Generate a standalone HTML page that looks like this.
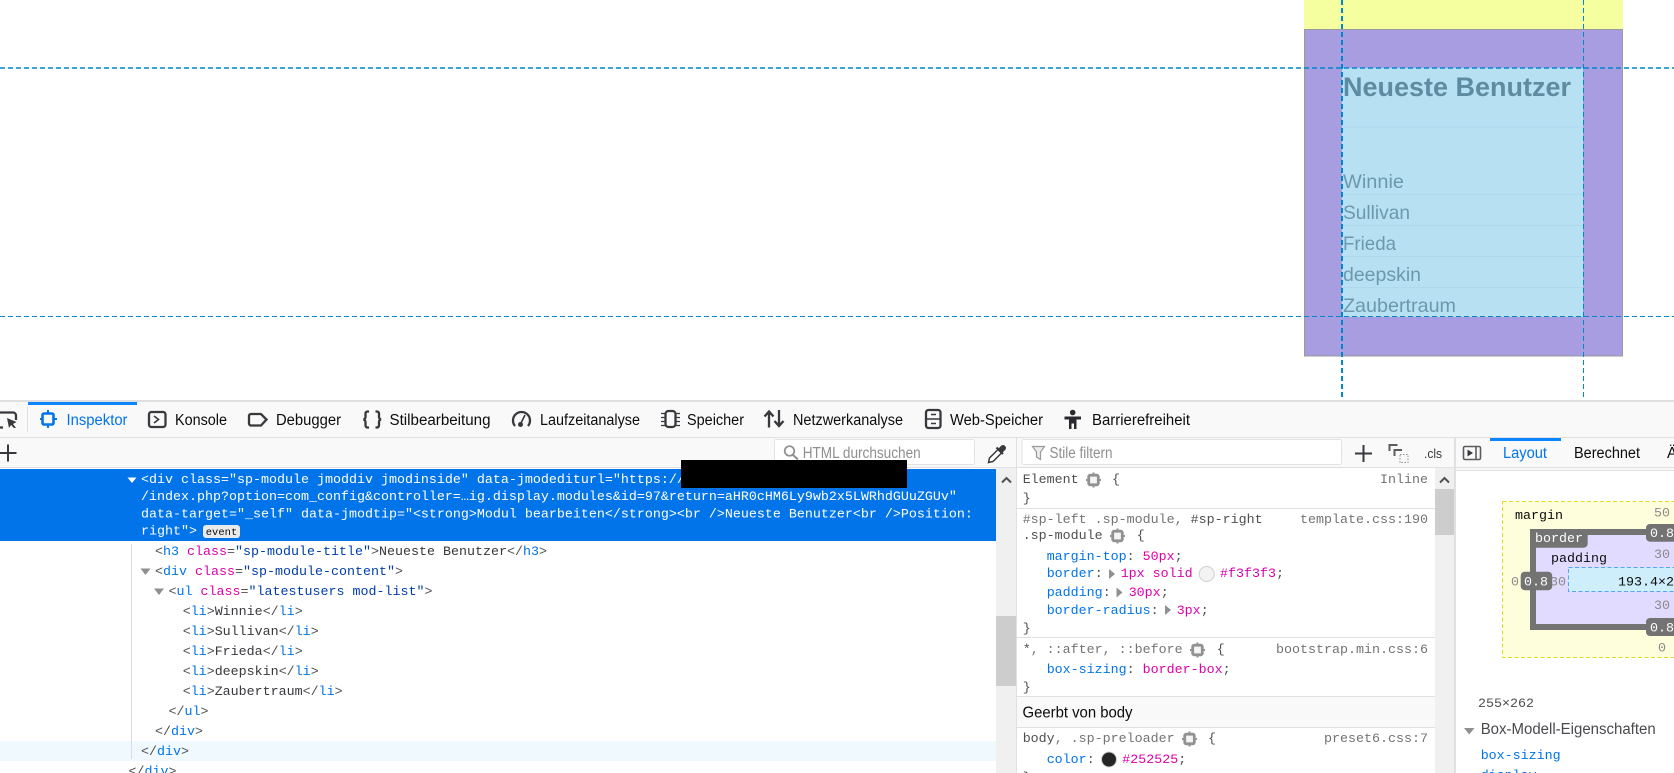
<!DOCTYPE html>
<html lang="de"><head><meta charset="utf-8"><title>Inspektor</title>
<style>
html,body{margin:0;padding:0;background:#fff;overflow:hidden}
svg{display:block}
text{white-space:pre}
.m{font:13.33px "Liberation Mono",monospace;transform:translateY(-1px)}
.s{font:15.3px "Liberation Sans",sans-serif;fill:#0c0c0d}
.b{fill:#0074e8}.p{fill:#dd00a9}.v{fill:#003eaa}.g{fill:#4f4f52}.t{fill:#38383d}.d{fill:#737373}.w{fill:#fff}.k{fill:#0c0c0d}.n{fill:#8a8a8a}
.i{fill:none;stroke:#38383d;stroke-width:2.3}
</style></head><body>
<svg xmlns="http://www.w3.org/2000/svg" width="1674" height="773" viewBox="0 0 1674 773">
<defs>
<g id="node"><rect x="-4.800" y="-4.800" width="9.600" height="9.600" rx="1.500" fill="#f4f4f4" stroke="#929292" stroke-width="2.800"/><path d="M-7.500 0H-5M5 0H7.500M0-7.500V-5M0 5V7.500" stroke="#929292" stroke-width="2"/></g>
</defs>
<rect width="1674" height="773" fill="#fff"/>
<!-- page overlay -->
<rect x="1304" y="0" width="319" height="29" fill="#f5ffa0"/>
<rect x="1304.500" y="29.500" width="318" height="326.500" fill="#a79de0" stroke="#9a9a9a"/>
<rect x="1342" y="68" width="241" height="249" fill="#b7e0f3"/>
<path d="M1342 127H1583M1342 194.500H1583M1342 225.500H1583M1342 256.500H1583M1342 287.500H1583" stroke="#aed9ec" stroke-width="1"/>
<text x="1343" y="96" font-family="Liberation Sans" font-weight="700" font-size="27" fill="#5f8ba0" textLength="228" lengthAdjust="spacingAndGlyphs">Neueste Benutzer</text>
<g font-family="Liberation Sans" font-size="19.500" fill="#6d98ac">
<text x="1343" y="188" textLength="61" lengthAdjust="spacingAndGlyphs">Winnie</text>
<text x="1343" y="219" textLength="67" lengthAdjust="spacingAndGlyphs">Sullivan</text>
<text x="1343" y="250" textLength="53" lengthAdjust="spacingAndGlyphs">Frieda</text>
<text x="1343" y="281" textLength="78" lengthAdjust="spacingAndGlyphs">deepskin</text>
<text x="1343" y="312" textLength="113" lengthAdjust="spacingAndGlyphs">Zaubertraum</text>
</g>
<g fill="none" stroke="#0088cc" stroke-dasharray="5 3">
<path d="M0 68H1674" stroke-width="1.400"/>
<path d="M0 316.500H1674" stroke-width="1"/>
<path d="M1342 0V400" stroke-width="2"/>
<path d="M1583.500 0V400" stroke-width="1"/>
</g>

<!-- devtools toolbar -->
<rect x="0" y="400" width="1674" height="373" fill="#fff"/>
<rect x="0" y="402" width="1674" height="66" fill="#f9f9fa"/>
<rect x="0" y="400" width="1674" height="2" fill="#e0e0e2"/>
<rect x="0" y="437" width="1674" height="1" fill="#e0e0e2"/>
<rect x="0" y="467" width="1674" height="1" fill="#e0e0e2"/>
<rect x="27" y="407" width="1" height="25" fill="#e0e0e2"/>
<rect x="28" y="402" width="109" height="3" fill="#0a84ff"/>
<!-- pick -->
<path class="i" d="M-2 412.500H13a3 3 0 0 1 3 3V420M3 427.500H-2"/>
<path d="M7 418L16.500 422L13 424L16 428H14L11 425L9 428Z" fill="#38383d"/>
<!-- inspector -->
<rect x="42.500" y="413.500" width="11" height="11" rx="1.500" fill="none" stroke="#0074e8" stroke-width="2.600"/>
<path d="M40 419H43M53 419H57M48 410V414M48 424V428" stroke="#0074e8" stroke-width="2"/>
<text class="s b" style="fill:#0074e8" x="66.500" y="425" textLength="61" lengthAdjust="spacingAndGlyphs">Inspektor</text>
<!-- console -->
<rect x="149" y="412" width="16.500" height="15" rx="2.500" class="i"/>
<path d="M154 416L158.500 419.500L154 423" fill="none" stroke="#38383d" stroke-width="1.600"/>
<text class="s" x="175" y="425" textLength="52" lengthAdjust="spacingAndGlyphs">Konsole</text>
<!-- debugger -->
<path class="i" d="M251 414H261L266.500 419.500L261 425.500H251a2 2 0 0 1-2-2V416a2 2 0 0 1 2-2Z"/>
<text class="s" x="276" y="425" textLength="65" lengthAdjust="spacingAndGlyphs">Debugger</text>
<!-- style -->
<path class="i" d="M369 411.500h-1.500a2 2 0 0 0-2 2V417a2.500 2.500 0 0 1-2 2.500a2.500 2.500 0 0 1 2 2.500v3.500a2 2 0 0 0 2 2H369M375.500 411.500h1.500a2 2 0 0 1 2 2V417a2.500 2.500 0 0 0 2 2.500a2.500 2.500 0 0 0-2 2.500v3.500a2 2 0 0 1-2 2h-1.500"/>
<text class="s" x="389.500" y="425" textLength="101" lengthAdjust="spacingAndGlyphs">Stilbearbeitung</text>
<!-- performance -->
<path class="i" d="M515 426a8.500 8.500 0 1 1 13 0"/>
<circle cx="520.500" cy="424.500" r="2.500" fill="#38383d"/><path d="M520.500 424L525 415" stroke="#38383d" stroke-width="1.600"/>
<text class="s" x="540" y="425" textLength="100" lengthAdjust="spacingAndGlyphs">Laufzeitanalyse</text>
<!-- memory -->
<rect x="665.500" y="411" width="10" height="16" rx="3" class="i"/>
<path d="M661 413.500H665M661 417.500H665M661 421.500H665M661 425.500H665M676 413.500H680M676 417.500H680M676 421.500H680M676 425.500H680" stroke="#38383d" stroke-width="1.200"/>
<text class="s" x="687" y="425" textLength="57" lengthAdjust="spacingAndGlyphs">Speicher</text>
<!-- network -->
<path class="i" d="M769 427.500V412M764.500 416.500L769 411.500L773.500 416.500M779 410V425.500M774.500 421L779 426L783.500 421" stroke-width="2.200"/>
<text class="s" x="793" y="425" textLength="110" lengthAdjust="spacingAndGlyphs">Netzwerkanalyse</text>
<!-- storage -->
<rect x="926" y="410" width="14.500" height="18" rx="2.500" class="i"/>
<path d="M926 419H940M931 414.500H936M931 423.500H936" stroke="#38383d" stroke-width="1.600"/>
<text class="s" x="950" y="425" textLength="93" lengthAdjust="spacingAndGlyphs">Web-Speicher</text>
<!-- a11y -->
<circle cx="1072.700" cy="412.500" r="2.800" fill="#2a2a2e"/>
<path d="M1064.500 416.500H1081V419.500H1076.500V429H1074V423.500H1071.500V429H1069V419.500H1064.500Z" fill="#2a2a2e"/>
<text class="s" x="1092" y="425" textLength="98" lengthAdjust="spacingAndGlyphs">Barrierefreiheit</text>

<!-- second toolbar -->
<path d="M0 453H16.500M8 444.500V461.500" stroke="#38383d" stroke-width="2"/>
<rect x="774.500" y="439.500" width="200" height="25" rx="2" fill="#fff" stroke="#e3e3e5"/>
<circle cx="789.500" cy="451" r="4.800" fill="none" stroke="#8f8f8f" stroke-width="1.700"/><path d="M793 455L798 459.500" stroke="#8f8f8f" stroke-width="2"/>
<text class="s" style="fill:#8f8f92" x="802.700" y="458" textLength="118" lengthAdjust="spacingAndGlyphs">HTML durchsuchen</text>
<path d="M988.500 462.500L989.500 458L998 449.500L1001.500 453L993 461.500Z" fill="#fff" stroke="#38383d" stroke-width="1.500"/>
<path d="M996.500 447.500L1003 454M999 449.500L1002 446.500a1.800 1.800 0 0 1 2.500 2.500L1001.500 452" fill="#38383d" stroke="#38383d" stroke-width="2.200"/>
<rect x="1022" y="439.500" width="319.500" height="25" rx="2" fill="#fff" stroke="#e3e3e5"/>
<path d="M1032.500 446.500H1044.500L1040.500 452V459.500L1036.500 457V452Z" fill="#ececec" stroke="#9a9a9a" stroke-width="1.200"/>
<text class="s" style="fill:#8f8f92" x="1049.500" y="458" textLength="63" lengthAdjust="spacingAndGlyphs">Stile filtern</text>
<path d="M1355 453.500H1372M1363.500 445V462" stroke="#38383d" stroke-width="2"/>
<path d="M1397.500 445H1389.500V451M1402 450H1394.500V456" fill="none" stroke="#5c5c5f" stroke-width="2"/>
<rect x="1400" y="454.500" width="8" height="8" fill="none" stroke="#8f8f8f" stroke-dasharray="1.500 1.500"/>
<text class="s" style="fill:#38383d;font-size:13px" x="1424" y="458" textLength="18" lengthAdjust="spacingAndGlyphs">.cls</text>
<!-- right tabs -->
<rect x="1463.500" y="446.500" width="17" height="13" rx="1.500" fill="none" stroke="#5c5c5f" stroke-width="1.600"/>
<path d="M1476 446.500V459.500" stroke="#5c5c5f" stroke-width="1.600"/><path d="M1467.500 449.500L1473 453L1467.500 456.500Z" fill="#38383d"/>
<rect x="1490" y="438" width="71" height="3" fill="#0a84ff"/>
<text class="s b" style="fill:#0074e8" x="1503" y="458" textLength="44" lengthAdjust="spacingAndGlyphs">Layout</text>
<text class="s" x="1574" y="458" textLength="66" lengthAdjust="spacingAndGlyphs">Berechnet</text>
<text class="s" x="1667" y="458">Ä</text>

<!-- columns -->
<rect x="1016" y="438" width="1" height="335" fill="#e0e0e2"/>
<rect x="1454" y="438" width="2" height="335" fill="#e0e0e2"/>
<rect x="1456" y="468" width="218" height="3" fill="#f9f9fa"/>
<rect x="1456" y="470" width="218" height="1" fill="#e0e0e2"/>
<rect x="996" y="468" width="20" height="305" fill="#f0f0f0"/>
<rect x="996" y="616" width="20" height="70" fill="#cdcdcd"/>
<path d="M1002 482.500L1006.500 478L1011 482.500" fill="none" stroke="#505050" stroke-width="2"/>
<rect x="1435" y="468" width="19" height="305" fill="#f0f0f0"/>
<rect x="1435" y="489" width="19" height="46" fill="#cdcdcd"/>
<path d="M1440 482.500L1444.500 478L1449 482.500" fill="none" stroke="#505050" stroke-width="2"/>

<!-- markup panel -->
<rect x="0" y="741" width="996" height="20" fill="#f0f9fe"/>
<rect x="131" y="544" width="1" height="215" fill="#dcdcdc"/>
<rect x="0" y="469" width="996" height="72" fill="#0074e8"/>
<path d="M127.500 477.500H136.500L132 483Z" fill="#fff"/>
<g class="m">
<text class="w" x="141" y="484">&lt;div class=&quot;sp-module jmoddiv jmodinside&quot; data-jmodediturl=&quot;https://</text>
<text class="w" x="141" y="501">/index.php?option=com_config&amp;controller=…ig.display.modules&amp;id=97&amp;return=aHR0cHM6Ly9wb2x5LWRhdGUuZGUv&quot;</text>
<text class="w" x="141" y="518.500">data-target=&quot;_self&quot; data-jmodtip=&quot;&lt;strong&gt;Modul bearbeiten&lt;/strong&gt;&lt;br /&gt;Neueste Benutzer&lt;br /&gt;Position:</text>
<text class="w" x="141" y="535.500">right&quot;&gt;</text>
</g>
<rect x="203" y="525" width="37" height="13" rx="3" fill="#eaeaea"/>
<text x="221.500" y="535" text-anchor="middle" font-family="Liberation Mono" font-size="10.500" fill="#0c0c0d">event</text>
<rect x="681" y="460" width="226" height="28" fill="#000"/>
<g class="m">
<text x="155" y="556"><tspan class="g">&lt;</tspan><tspan class="b">h3 </tspan><tspan class="p">class</tspan><tspan class="g">=</tspan><tspan class="v">&quot;sp-module-title&quot;</tspan><tspan class="g">&gt;</tspan><tspan class="t">Neueste Benutzer</tspan><tspan class="g">&lt;/</tspan><tspan class="b">h3</tspan><tspan class="g">&gt;</tspan></text>
<text x="155" y="576"><tspan class="g">&lt;</tspan><tspan class="b">div </tspan><tspan class="p">class</tspan><tspan class="g">=</tspan><tspan class="v">&quot;sp-module-content&quot;</tspan><tspan class="g">&gt;</tspan></text>
<text x="168.500" y="596"><tspan class="g">&lt;</tspan><tspan class="b">ul </tspan><tspan class="p">class</tspan><tspan class="g">=</tspan><tspan class="v">&quot;latestusers mod-list&quot;</tspan><tspan class="g">&gt;</tspan></text>
<text x="182.700" y="616"><tspan class="g">&lt;</tspan><tspan class="b">li</tspan><tspan class="g">&gt;</tspan><tspan class="t">Winnie</tspan><tspan class="g">&lt;/</tspan><tspan class="b">li</tspan><tspan class="g">&gt;</tspan></text>
<text x="182.700" y="636"><tspan class="g">&lt;</tspan><tspan class="b">li</tspan><tspan class="g">&gt;</tspan><tspan class="t">Sullivan</tspan><tspan class="g">&lt;/</tspan><tspan class="b">li</tspan><tspan class="g">&gt;</tspan></text>
<text x="182.700" y="656"><tspan class="g">&lt;</tspan><tspan class="b">li</tspan><tspan class="g">&gt;</tspan><tspan class="t">Frieda</tspan><tspan class="g">&lt;/</tspan><tspan class="b">li</tspan><tspan class="g">&gt;</tspan></text>
<text x="182.700" y="676"><tspan class="g">&lt;</tspan><tspan class="b">li</tspan><tspan class="g">&gt;</tspan><tspan class="t">deepskin</tspan><tspan class="g">&lt;/</tspan><tspan class="b">li</tspan><tspan class="g">&gt;</tspan></text>
<text x="182.700" y="696"><tspan class="g">&lt;</tspan><tspan class="b">li</tspan><tspan class="g">&gt;</tspan><tspan class="t">Zaubertraum</tspan><tspan class="g">&lt;/</tspan><tspan class="b">li</tspan><tspan class="g">&gt;</tspan></text>
<text x="168.500" y="716"><tspan class="g">&lt;/</tspan><tspan class="b">ul</tspan><tspan class="g">&gt;</tspan></text>
<text x="155" y="736"><tspan class="g">&lt;/</tspan><tspan class="b">div</tspan><tspan class="g">&gt;</tspan></text>
<text x="141" y="756"><tspan class="g">&lt;/</tspan><tspan class="b">div</tspan><tspan class="g">&gt;</tspan></text>
<text x="128.500" y="776"><tspan class="g">&lt;/</tspan><tspan class="b">div</tspan><tspan class="g">&gt;</tspan></text>
</g>
<path d="M140.500 568.500H150.500L145.500 575Z" fill="#8f8f8f"/>
<path d="M154 588.500H164L159 595Z" fill="#8f8f8f"/>

<!-- rules panel -->
<rect x="1017" y="697" width="418" height="30" fill="#f9f9fa"/>
<path d="M1017 508.500H1435M1017 637.500H1435M1017 696.500H1435M1017 727.500H1435" stroke="#e0e0e2"/>
<g class="m">
<text class="g" x="1022.700" y="484">Element</text>
<text class="g" x="1112" y="484">{</text>
<text class="d" x="1428" y="484" text-anchor="end">Inline</text>
<text class="g" x="1022.700" y="503">}</text>
<text x="1022.700" y="524"><tspan class="d">#sp-left .sp-module, </tspan><tspan class="g">#sp-right</tspan></text>
<text class="d" x="1428" y="524" text-anchor="end">template.css:190</text>
<text class="g" x="1022.700" y="540">.sp-module</text>
<text class="g" x="1136.700" y="540">{</text>
<text x="1046.700" y="561"><tspan class="b">margin-top</tspan><tspan class="g">: </tspan><tspan class="p">50px</tspan><tspan class="g">;</tspan></text>
<text class="b" x="1046.700" y="578">border<tspan class="g">:</tspan></text>
<text class="p" x="1120.700" y="578">1px solid</text>
<text class="p" x="1220" y="578">#f3f3f3<tspan class="g">;</tspan></text>
<text class="b" x="1046.700" y="597">padding<tspan class="g">:</tspan></text>
<text class="p" x="1128.700" y="597">30px<tspan class="g">;</tspan></text>
<text class="b" x="1046.700" y="615">border-radius<tspan class="g">:</tspan></text>
<text class="p" x="1176.700" y="615">3px<tspan class="g">;</tspan></text>
<text class="g" x="1022.700" y="633">}</text>
<text x="1022.700" y="654"><tspan class="g">*</tspan><tspan class="d">, ::after, ::before</tspan></text>
<text class="g" x="1216.700" y="654">{</text>
<text class="d" x="1428" y="654" text-anchor="end">bootstrap.min.css:6</text>
<text x="1046.700" y="674"><tspan class="b">box-sizing</tspan><tspan class="g">: </tspan><tspan class="p">border-box</tspan><tspan class="g">;</tspan></text>
<text class="g" x="1022.700" y="692">}</text>
<text x="1022.700" y="743"><tspan class="g">body</tspan><tspan class="d">, .sp-preloader</tspan></text>
<text class="g" x="1208" y="743">{</text>
<text class="d" x="1428" y="743" text-anchor="end">preset6.css:7</text>
<text class="b" x="1046.700" y="764">color<tspan class="g">:</tspan></text>
<text class="p" x="1122.300" y="764">#252525<tspan class="g">;</tspan></text>
<text class="g" x="1022.700" y="782">}</text>
</g>
<text class="s" x="1022.500" y="717.500" textLength="110" lengthAdjust="spacingAndGlyphs">Geerbt von body</text>
<use href="#node" x="1093.500" y="480"/>
<use href="#node" x="1117.500" y="536"/>
<use href="#node" x="1197.500" y="650"/>
<use href="#node" x="1189.500" y="739"/>
<path d="M1109 569L1115 574L1109 579Z" fill="#8f8f8f"/>
<path d="M1116.500 587.500L1122.500 592.500L1116.500 597.500Z" fill="#8f8f8f"/>
<path d="M1165 605L1171 610L1165 615Z" fill="#8f8f8f"/>
<circle cx="1206.700" cy="574" r="7.500" fill="#f3f3f3" stroke="#cfcfcf"/>
<circle cx="1109" cy="759.500" r="7.500" fill="#252525" stroke="#cfcfcf"/>

<!-- box model -->
<rect x="1502.500" y="501.500" width="190" height="156" fill="#fefedc" stroke="#dede1e" stroke-dasharray="4 2.500"/>
<rect x="1533" y="532" width="160" height="95" fill="#e1dbff" stroke="#737373" stroke-width="6"/>
<rect x="1568.500" y="567.500" width="125" height="24" fill="#cdeefa" stroke="#55a6f5" stroke-dasharray="4 2.500"/>
<path d="M1530 529H1587.700V543.700a4 4 0 0 1-4 4H1530Z" fill="#737373"/>
<g class="m">
<text class="k" x="1515" y="520">margin</text>
<text class="n" x="1654" y="517.700">50</text>
<text class="w" x="1535" y="543">border</text>
<text class="k" x="1551" y="563">padding</text>
<text class="n" x="1654" y="559">30</text>
<text class="n" x="1550" y="586.700">30</text>
<text class="k" x="1618" y="586.700">193.4×249</text>
<text class="n" x="1511" y="586.700">0</text>
<text class="n" x="1654" y="610">30</text>
<text class="n" x="1658" y="652.700">0</text>
</g>
<rect x="1520.700" y="571.700" width="31.500" height="18.500" rx="4" fill="#737373"/>
<rect x="1646" y="524" width="40" height="17.700" rx="4" fill="#737373"/>
<rect x="1646" y="618" width="40" height="18" rx="4" fill="#737373"/>
<g class="m">
<text class="w" x="1524" y="586.700">0.8</text>
<text class="w" x="1650" y="538">0.8</text>
<text class="w" x="1650" y="632.700">0.8</text>
<text class="g" x="1478" y="708">255×262</text>
<text class="b" x="1480.700" y="760">box-sizing</text>
<text class="b" x="1480.700" y="780">display</text>
</g>
<path d="M1464 728H1474.500L1469.200 734.500Z" fill="#8f8f8f"/>
<text class="s" style="fill:#4a4a4f" x="1480.700" y="734" textLength="175" lengthAdjust="spacingAndGlyphs">Box-Modell-Eigenschaften</text>
</svg>
</body></html>
